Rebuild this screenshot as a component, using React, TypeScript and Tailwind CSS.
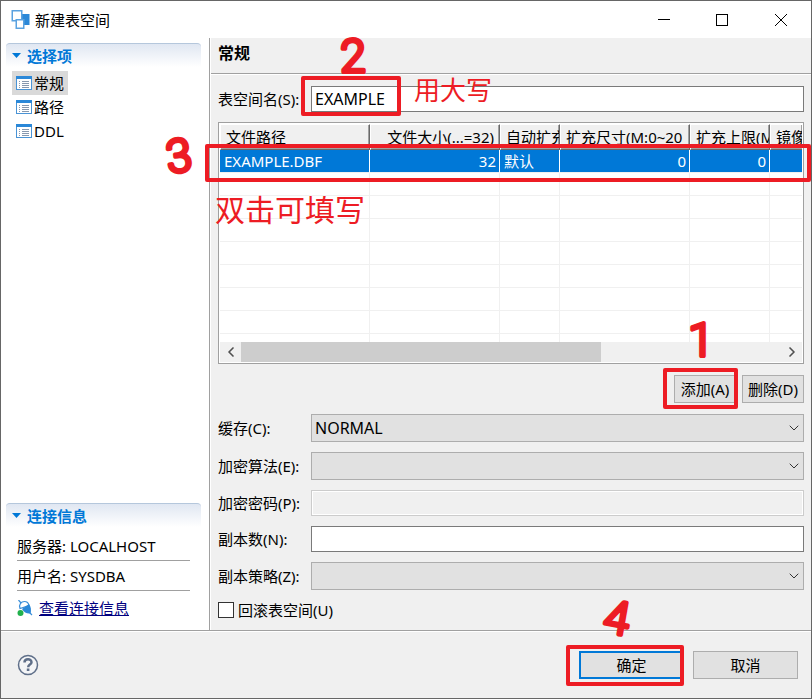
import { useState, type ReactNode } from 'react';
import { clsx } from 'clsx';
import { ChevronDown, ChevronLeft, ChevronRight } from 'lucide-react';

const pages = ['常规', '路径', 'DDL'];

const columns = [
  { title: '文件路径', value: 'EXAMPLE.DBF', width: 'w-[150px]', align: 'text-left' },
  { title: '文件大小(...=32)', value: '32', width: 'w-[130px]', align: 'text-right' },
  { title: '自动扩充', value: '默认', width: 'w-[60px]', align: 'text-left' },
  { title: '扩充尺寸(M:0~20', value: '0', width: 'w-[130px]', align: 'text-right' },
  { title: '扩充上限(M', value: '0', width: 'w-[80px]', align: 'text-right' },
  { title: '镜像', value: '', width: '', align: 'text-left' },
];

const emptyRows = [1, 2, 3, 4, 5, 6, 7];

function AppIcon() {
  return (
    <svg className="h-5 w-5" viewBox="0 0 20 20" aria-hidden="true">
      <rect x="8" y="4" width="10.500" height="11" fill="#2b88d8" />
      <rect x="1.250" y="0.750" width="9.500" height="10" fill="#fff" stroke="#5aa2e0" strokeWidth="1.500" />
      <rect x="5.250" y="9.750" width="7.500" height="8.500" fill="#fff" stroke="#5aa2e0" strokeWidth="1.500" />
    </svg>
  );
}

function PageIcon() {
  return (
    <svg className="h-4 w-4" viewBox="0 0 16 16" aria-hidden="true">
      <rect x="0.5" y="1.5" width="15" height="13" fill="#fff" stroke="#4a94d6" />
      <rect x="0" y="1" width="16" height="3" fill="#2b88d8" />
      <path d="M3 6.5h1M3 8.5h1M3 10.5h1M3 12.5h1M6 6.5h7M6 8.5h7M6 10.5h7M6 12.5h7" stroke="#8798ae" />
    </svg>
  );
}

function ConnectionIcon() {
  return (
    <svg className="h-4 w-4" viewBox="0 0 16 16" aria-hidden="true">
      <path d="M1.500 0l2.500 3M12 12l3 3" stroke="#3b8fd9" strokeWidth="1.200" />
      <path d="M3 8.500C1.500 5 4 1.500 7.500 1.500c3 0 4 1.500 4.500 4z" fill="#fff" stroke="#3b8fd9" strokeWidth="1.200" />
      <path d="M5 9l7-5c2 3 2.500 6 1.500 9.500C10 14 7 12.500 5 9z" fill="#2b88d8" />
      <circle cx="3.500" cy="13" r="3" fill="#22b14c" />
    </svg>
  );
}

function HelpIcon() {
  return (
    <svg className="h-[22px] w-[22px]" viewBox="0 0 22 22" aria-hidden="true">
      <circle cx="11" cy="11" r="9.500" fill="#f4f5f7" stroke="#5f6f89" strokeWidth="1.500" />
      <path d="M7.500 8.500c0-4.500 7-4.300 7-.3 0 2.500-3.300 2.300-3.300 5" fill="none" stroke="#5f6f89" strokeWidth="2.500" />
      <rect x="9.800" y="14.500" width="2.600" height="2.500" fill="#5f6f89" />
    </svg>
  );
}

// Red frame drawn over the control it wraps
function Mark({ className }: { className: string }) {
  return <span className={clsx('pointer-events-none absolute z-10 rounded-xs border-4 border-[#ed1c24]', className)} />;
}

// Step number in thick marker strokes
function StepNumber({ className, value, tilt = 0 }: { className: string; value: string; tilt?: number }) {
  return (
    <svg className={clsx('pointer-events-none absolute z-20 h-14 w-12', className)} viewBox="0 0 48 56">
      <text
        x="24"
        y="44"
        textAnchor="middle"
        transform={`rotate(${tilt} 24 28)`}
        className="fill-[#ed1c24] stroke-[#ed1c24] font-['Roboto'] text-[46px] font-light"
        strokeWidth="4"
        strokeLinejoin="round"
      >
        {value}
      </text>
    </svg>
  );
}

function Section({ title, children }: { title: string; children: ReactNode }) {
  return (
    <section className="pr-2 pl-[5px]">
      <h2 className="flex h-6 items-center gap-[6px] rounded-t-[4px] border-t border-[#b5c7dc] bg-linear-to-b from-[#e0e7f2] to-white pl-[6px] text-[15px] font-bold text-[#0078d7]">
        <svg className="h-[5px] w-[9px]" viewBox="0 0 9 5" aria-hidden="true">
          <path d="M0 0h9L4.500 5z" fill="#0078d7" />
        </svg>
        {title}
      </h2>
      {children}
    </section>
  );
}

function Combo({ id, label, value }: { id: string; label: string; value: string }) {
  return (
    <div className="flex items-center">
      <label htmlFor={id} className="w-[93px] shrink-0">{label}</label>
      <div className="relative flex-1">
        <select
          id={id}
          defaultValue={value}
          className="block h-7 w-full appearance-none border border-[#adadad] bg-[#e1e1e1] px-[3px] text-[16px]"
        >
          <option value={value}>{value}</option>
        </select>
        <ChevronDown className="pointer-events-none absolute top-[6px] right-[2px] h-4 w-4 text-[#333]" strokeWidth={1.5} />
      </div>
    </div>
  );
}

export default function App() {
  const [page, setPage] = useState('常规');
  const [name, setName] = useState('EXAMPLE');

  return (
    <div className="flex min-h-screen flex-col border border-[#666] bg-white font-['Noto_Sans','Noto_Sans_CJK_SC',sans-serif] text-[15px] leading-[20px] text-black">
      <header className="flex h-[37px] items-center justify-between">
        <h1 className="flex items-center gap-[4px] pl-[10px]">
          <AppIcon />
          新建表空间
        </h1>
        <div className="flex">
          <button aria-label="最小化" className="flex h-9 w-[58px] items-center justify-center">
            <svg className="h-3 w-3" viewBox="0 0 12 12"><path d="M0 5.500h12" stroke="#000" /></svg>
          </button>
          <button aria-label="最大化" className="flex h-9 w-[58px] items-center justify-center">
            <svg className="h-3 w-3" viewBox="0 0 12 12"><rect x=".5" y=".5" width="11" height="11" fill="none" stroke="#000" /></svg>
          </button>
          <button aria-label="关闭" className="flex h-9 w-[60px] items-center justify-center">
            <svg className="h-3 w-3" viewBox="0 0 12 12"><path d="M0 0l12 12M12 0L0 12" stroke="#000" /></svg>
          </button>
        </div>
      </header>

      <div className="flex flex-1">
        <aside className="flex w-[209px] shrink-0 flex-col justify-between border-r border-[#a0a0a0] pt-[5px] pb-3">
          <Section title="选择项">
            <ul className="mt-1 pl-[6px]">
              {pages.map((item) => (
                <li key={item}>
                  <button
                    onClick={() => setPage(item)}
                    className={clsx('flex h-6 items-center gap-[2px] px-1', page === item && 'bg-[#d9d9d9]')}
                  >
                    <PageIcon />
                    {item}
                  </button>
                </li>
              ))}
            </ul>
          </Section>

          <Section title="连接信息">
            <div className="mt-[2px] mr-[11px] ml-[11px]">
              <p className="border-b border-[#a0a0a0] pt-[7px] pb-1">服务器: LOCALHOST</p>
              <p className="border-b border-[#a0a0a0] pt-[5px] pb-1">用户名: SYSDBA</p>
              <p className="flex items-center gap-[6px] pt-[7px]">
                <ConnectionIcon />
                <a href="#connection" className="text-[#000080] underline">查看连接信息</a>
              </p>
            </div>
          </Section>
        </aside>

        <main className="min-w-0 flex-1 border-l border-white bg-[#f0f0f0]">
          <h2 className="h-[36px] border-b border-[#a0a0a0] pt-[5px] pl-[7px] text-[16px] font-bold">{page}</h2>
          <form
            className="flex flex-col gap-[10px] border-t border-white px-[7px] pt-[11px] pb-[10px]"
            onSubmit={(e) => e.preventDefault()}
          >
            <div className="relative flex items-center">
              <label htmlFor="name" className="w-[93px] shrink-0">表空间名(S):</label>
              <input
                id="name"
                value={name}
                onChange={(e) => setName(e.target.value)}
                className="h-[26px] min-w-0 flex-1 border border-[#7a7a7a] bg-white px-[3px] text-[16px]"
              />
              <Mark className="-top-[10px] left-[83px] h-10 w-[100px]" />
              <StepNumber className="-top-[58px] left-[111px]" value="2" />
              <span className="pointer-events-none absolute -top-[12px] left-[196px] text-[26px] leading-[32px] text-[#ed1c24]">
                用大写
              </span>
            </div>

            <div className="relative">
              <div className="overflow-hidden border border-[#a0a0a0] bg-white p-px">
                <div className="h-[218px] overflow-hidden">
                  <table className="w-full table-fixed border-separate border-spacing-0">
                    <thead>
                      <tr>
                        {columns.map((col) => (
                          <th
                            key={col.title}
                            className={clsx(
                              'h-[26px] overflow-hidden border-t border-r border-b border-l border-t-white border-r-[#696969] border-b-[#696969] border-l-white bg-[#f0f0f0] pl-[5px] font-normal whitespace-nowrap shadow-[inset_-1px_-1px_0_#a0a0a0] last:border-r-0',
                              col.width,
                              col.value === '32' ? 'pr-[5px] text-right' : 'text-left',
                            )}
                          >
                            {col.title}
                          </th>
                        ))}
                      </tr>
                    </thead>
                    <tbody>
                      <tr className="bg-[#0078d7] text-white">
                        {columns.map((col) => (
                          <td
                            key={col.title}
                            className={clsx('h-[23px] border-r border-b border-r-white border-b-[#f0f0f0] pr-[3px] pl-1 last:border-r-0', col.align)}
                          >
                            {col.value}
                          </td>
                        ))}
                      </tr>
                      {emptyRows.map((row) => (
                        <tr key={row}>
                          {columns.map((col) => (
                            <td key={col.title} className="h-[23px] border-r border-b border-[#f0f0f0] last:border-r-0" />
                          ))}
                        </tr>
                      ))}
                      <tr>
                        {columns.map((col) => (
                          <td key={col.title} className="h-2 border-r border-[#f0f0f0] last:border-r-0" />
                        ))}
                      </tr>
                    </tbody>
                  </table>
                </div>
                <div className="flex h-5 items-center bg-[#f0f0f0]">
                  <button type="button" aria-label="向左滚动" className="flex w-[21px] justify-center">
                    <ChevronLeft className="h-4 w-4 text-[#505050]" strokeWidth={2.5} />
                  </button>
                  <div className="h-full flex-1">
                    <div className="h-full w-2/3 bg-[#cdcdcd]" />
                  </div>
                  <button type="button" aria-label="向右滚动" className="flex w-[21px] justify-center">
                    <ChevronRight className="h-4 w-4 text-[#505050]" strokeWidth={2.5} />
                  </button>
                </div>
              </div>
              <Mark className="top-[22px] -right-[7px] -left-[13px] h-[38px]" />
              <StepNumber className="top-[6px] -left-[63px]" value="3" tilt={-8} />
              <span className="pointer-events-none absolute top-[72px] -left-[3px] text-[30px] leading-[32px] text-[#ed1c24]">
                双击可填写
              </span>
            </div>

            <div className="flex justify-end gap-[6px] py-px">
              <div className="relative">
                <button type="button" className="h-7 w-[62px] border border-[#adadad] bg-[#e1e1e1]">添加(A)</button>
                <Mark className="-top-[7px] -right-[2px] h-[41px] w-[75px]" />
                <StepNumber className="-top-[63px] left-[3px]" value="1" />
              </div>
              <button type="button" className="h-7 w-[62px] border border-[#adadad] bg-[#e1e1e1]">删除(D)</button>
            </div>

            <Combo id="cache" label="缓存(C):" value="NORMAL" />
            <Combo id="algorithm" label="加密算法(E):" value="" />
            <div className="flex items-center">
              <label htmlFor="password" className="w-[93px] shrink-0">加密密码(P):</label>
              <input
                id="password"
                type="password"
                disabled
                className="h-[26px] min-w-0 flex-1 border border-[#ccc] bg-[#f0f0f0] px-[3px] shadow-[inset_0_0_0_1px_#fff]"
              />
            </div>
            <div className="flex items-center">
              <label htmlFor="copies" className="w-[93px] shrink-0">副本数(N):</label>
              <input id="copies" className="h-[26px] min-w-0 flex-1 border border-[#7a7a7a] bg-white px-[3px]" />
            </div>
            <Combo id="policy" label="副本策略(Z):" value="" />
            <label className="flex items-center gap-1">
              <input type="checkbox" className="h-4 w-4 appearance-none border border-[#333] bg-white checked:bg-[#0078d7]" />
              回滚表空间(U)
            </label>
          </form>
        </main>
      </div>

      <footer className="border-t border-[#a0a0a0] bg-[#f0f0f0]">
        <div className="flex h-[67px] items-center justify-between border-t border-white pr-[13px] pl-4">
          <button aria-label="帮助">
            <HelpIcon />
          </button>
          <div className="flex gap-[9px]">
            <div className="relative">
              <button className="h-7 w-[105px] border-2 border-[#0078d7] bg-[#e1e1e1]">确定</button>
              <Mark className="-top-[6px] right-0 h-[41px] w-[118px]" />
              <StepNumber className="-top-[61px] left-[14px]" value="4" tilt={10} />
            </div>
            <button className="h-7 w-[105px] border border-[#adadad] bg-[#e1e1e1]">取消</button>
          </div>
        </div>
      </footer>
    </div>
  );
}
